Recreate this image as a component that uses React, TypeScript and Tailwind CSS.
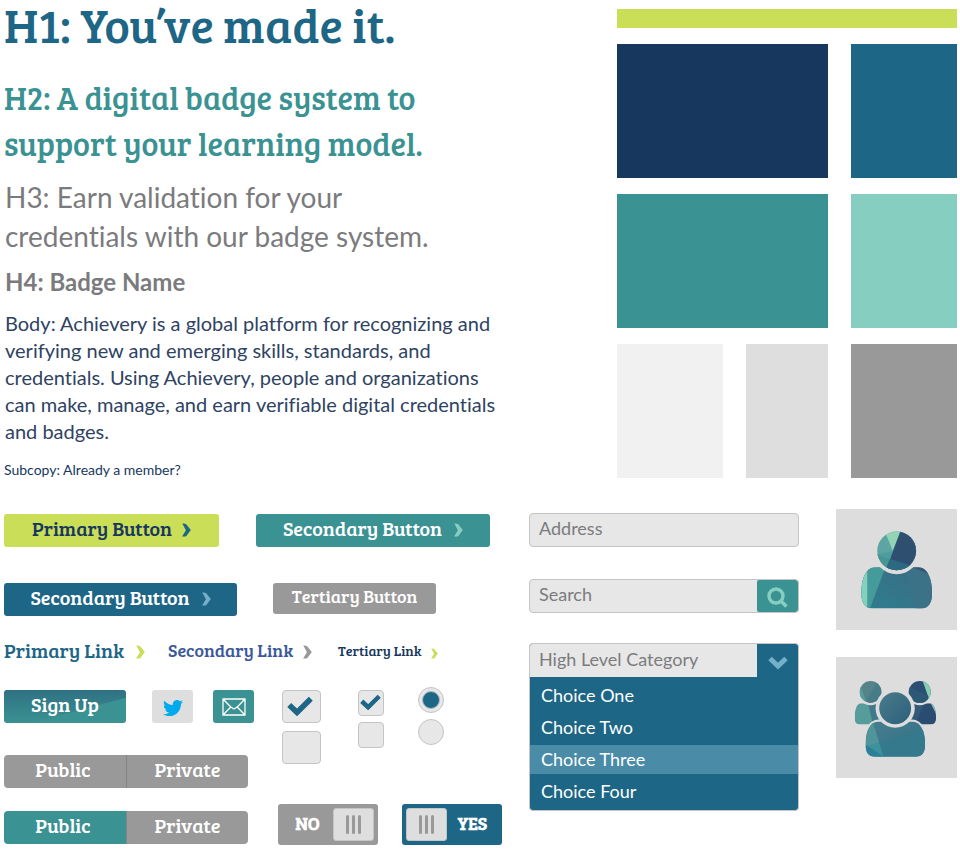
import { useState } from "react";
import type { ReactNode } from "react";
import { FaTwitter } from "react-icons/fa";

const slab = "font-['Bree_Serif','DejaVu_Serif_Condensed','DejaVu_Serif',serif]";

function Chevron({ className }: { className: string }) {
  return (
    <svg viewBox="0 0 9 14" aria-hidden="true" className={`mt-1 shrink-0 fill-current ${className}`}>
      <path d="M0.3 0.6 Q2.6 0.2 4.2 1.2 L8.8 7 L4.4 13 Q2.6 13.9 0.1 13.4 L3.9 7.2 Z" />
    </svg>
  );
}

function Check({ className }: { className: string }) {
  return (
    <svg
      viewBox="0 0 26 20"
      aria-hidden="true"
      className={`pointer-events-none absolute hidden fill-none stroke-[#1d6686] peer-checked:block ${className}`}
    >
      <path d="M2.2 9 L10 16.4 L23.8 2.8" strokeWidth="5.6" strokeLinejoin="miter" />
    </svg>
  );
}

function CheckBox({ label, small, defaultChecked }: { label: string; small?: boolean; defaultChecked?: boolean }) {
  return (
    <label className={`relative block ${small ? "h-[26px] w-[26px]" : "h-[33px] w-[39px]"}`}>
      <input
        type="checkbox"
        aria-label={label}
        defaultChecked={defaultChecked}
        className="peer block h-full w-full appearance-none rounded-[4px] border border-[#c4c4c4] bg-[#e7e7e7]"
      />
      <Check className={small ? "top-1 left-[2px] w-[21px]" : "top-[6px] left-[5px] w-[26px]"} />
    </label>
  );
}

function Radio({ label, defaultChecked }: { label: string; defaultChecked?: boolean }) {
  return (
    <label className="relative block h-[26px] w-[26px]">
      <input
        type="radio"
        name="option"
        aria-label={label}
        defaultChecked={defaultChecked}
        className="peer block h-full w-full appearance-none rounded-full border border-[#c4c4c4] bg-[#e7e7e7]"
      />
      <span className="pointer-events-none absolute inset-1 hidden rounded-full border border-[#a9bcc6] bg-[#1d6686] peer-checked:block" />
    </label>
  );
}

function Segmented({ label, initial }: { label: string; initial: string }) {
  const [active, setActive] = useState(initial);
  return (
    <div role="group" aria-label={label} className={`flex h-[33px] w-[244px] overflow-hidden rounded-[4px] text-xl text-white ${slab}`}>
      {["Public", "Private"].map((name) => (
        <button
          key={name}
          type="button"
          aria-pressed={active === name}
          onClick={() => setActive(name)}
          className={`w-1/2 border-l border-[#858585] pb-[5px] first:border-l-0 first:pr-1 ${active === name ? "bg-[#3a9292]" : "bg-[#999999]"}`}
        >
          {name}
        </button>
      ))}
    </div>
  );
}

function Toggle({ label, initial }: { label: string; initial: boolean }) {
  const [on, setOn] = useState(initial);
  return (
    <button
      type="button"
      role="switch"
      aria-label={label}
      aria-checked={on}
      onClick={() => setOn(!on)}
      className={`flex h-[41px] w-[100px] items-center justify-between rounded-[3px] px-1 text-lg font-bold text-white ${slab} ${on ? "flex-row-reverse bg-[#1d6686]" : "bg-[#999999]"}`}
    >
      <span className="flex-1 pb-1 text-center">{on ? "YES" : "NO"}</span>
      <span className="flex h-[33px] w-[41px] items-center justify-center gap-[3px] rounded-[3px] border border-[#c4c4c4] bg-[#dedede]">
        <span className="h-[19px] w-[3px] rounded-full bg-[#999999]" />
        <span className="h-[19px] w-[3px] rounded-full bg-[#999999]" />
        <span className="h-[19px] w-[3px] rounded-full bg-[#999999]" />
      </span>
    </button>
  );
}

function Button({ className, children }: { className: string; children: ReactNode }) {
  return (
    <button type="button" className={`flex items-center justify-center rounded-[3px] pb-[5px] ${slab} ${className}`}>
      {children}
    </button>
  );
}

function Palette() {
  return (
    <div aria-label="Colour palette" className="grid w-[340px] shrink-0 grid-cols-[106fr_82fr_106fr] gap-x-[23px] gap-y-4 self-start pt-[9px]">
      <div className="col-span-3 h-[19px] bg-[#cade58]" />
      <div className="col-span-2 h-[134px] bg-[#17375e]" />
      <div className="h-[134px] bg-[#1d6686]" />
      <div className="col-span-2 h-[134px] bg-[#3a9292]" />
      <div className="h-[134px] bg-[#86cfc0]" />
      <div className="h-[134px] bg-[#f1f1f1]" />
      <div className="h-[134px] bg-[#dedede]" />
      <div className="h-[134px] bg-[#999999]" />
    </div>
  );
}

function PersonCard() {
  return (
    <svg viewBox="32 28 364 363" role="img" aria-label="Member" className="block w-full bg-[#dddddd]">
      <defs>
        <clipPath id="person-head">
          <circle cx="214.500" cy="154" r="58.500" />
        </clipPath>
        <clipPath id="person-body">
          <path d="M150 203 C122 203 108 238 108 282 C108 310 120 327 142 327 H288 C310 327 321 310 321 282 C321 238 307 203 279 203 Z" />
        </clipPath>
        <linearGradient id="person-main" x1="0" y1="1" x2="1" y2="0">
          <stop offset="0" stopColor="#2e7f90" />
          <stop offset="1" stopColor="#3b6a82" />
        </linearGradient>
      </defs>
      <g clipPath="url(#person-body)">
        <rect x="100" y="195" width="230" height="140" fill="url(#person-main)" />
        <path d="M100 195 H184 L133 330 H100 Z" fill="#459b99" />
        <path d="M100 195 H126 V330 H100 Z" fill="#83d0bd" />
        <path d="M236 195 H330 V330 H272 Z" fill="#3c7287" />
        <path d="M262 203 H300 L314 225 Z" fill="#3b5777" />
      </g>
      <circle cx="214.500" cy="154" r="70" fill="#dddddd" />
      <g clipPath="url(#person-head)">
        <rect x="150" y="90" width="130" height="130" fill="#5da5a2" />
        <path d="M182 103 L190 90 H228 L203 154 Z" fill="#93d3b5" />
        <path d="M228 90 H280 V215 H180 Z" fill="#2f4f70" />
        <path d="M238 90 H280 V156 Z" fill="#335873" />
        <path d="M150 160 L194 180 L178 215 H150 Z" fill="#489694" />
        <path d="M194 178 L280 205 V220 H178 Z" fill="#2c6a82" />
        <path d="M203 154 L194 180 L158 164 Z" fill="#4e9d9d" />
      </g>
    </svg>
  );
}

function GroupCard() {
  return (
    <svg viewBox="34 23 364 364" role="img" aria-label="Group" className="block w-full bg-[#dddddd]">
      <defs>
        <clipPath id="group-left">
          <circle cx="138" cy="128" r="32.500" />
        </clipPath>
        <clipPath id="group-right">
          <circle cx="286" cy="128" r="33" />
        </clipPath>
        <clipPath id="group-left-body">
          <path d="M108 162 C96 163 90 184 90 206 C90 219 95 226 106 226 H190 V162 Z" />
        </clipPath>
        <clipPath id="group-right-body">
          <path d="M317 162 C329 163 335 184 335 206 C335 219 330 226 319 226 H235 V162 Z" />
        </clipPath>
        <clipPath id="group-body">
          <path d="M162 217 C137 217 123 246 123 286 C123 310 133 323 152 323 H273 C292 323 302 310 302 286 C302 246 288 217 263 217 Z" />
        </clipPath>
        <linearGradient id="group-face" x1="0" y1="0" x2="1" y2="1">
          <stop offset="0" stopColor="#4a7c8a" />
          <stop offset="1" stopColor="#2c5f7c" />
        </linearGradient>
        <linearGradient id="group-torso" x1="0" y1="0" x2="1" y2="1">
          <stop offset="0" stopColor="#4a7f8f" />
          <stop offset="1" stopColor="#2f6f86" />
        </linearGradient>
      </defs>
      <g clipPath="url(#group-left-body)">
        <rect x="90" y="160" width="100" height="70" fill="#559c9a" />
        <path d="M130 160 H190 V230 H146 Z" fill="#41788a" />
      </g>
      <g clipPath="url(#group-right-body)">
        <rect x="235" y="160" width="102" height="70" fill="#2a4c70" />
        <path d="M235 160 H300 L270 230 H235 Z" fill="#345877" />
        <path d="M317 158 L338 200 V158 Z" fill="#86cfb2" />
      </g>
      <circle cx="138" cy="128" r="40" fill="#dddddd" />
      <circle cx="286" cy="128" r="40" fill="#dddddd" />
      <g clipPath="url(#group-left)">
        <rect x="100" y="90" width="76" height="76" fill="#558389" />
        <path d="M100 105 L108 110 L126 162 H100 Z" fill="#559c9a" />
        <path d="M158 98 L124 154 L130 165 H176 V100 Z" fill="#467c88" />
      </g>
      <g clipPath="url(#group-right)">
        <rect x="250" y="90" width="76" height="76" fill="#2b4e72" />
        <path d="M293 90 L314 150 H325 V90 Z" fill="#86cfb2" />
        <path d="M250 110 L312 140 L300 165 H250 Z" fill="#2c5876" />
      </g>
      <path
        d="M162 217 C137 217 123 246 123 286 C123 310 133 323 152 323 H273 C292 323 302 310 302 286 C302 246 288 217 263 217 Z"
        fill="#dddddd"
        stroke="#dddddd"
        strokeWidth="12"
      />
      <g clipPath="url(#group-body)">
        <rect x="120" y="210" width="185" height="116" fill="url(#group-torso)" />
        <path d="M120 210 H142 L164 280 L120 294 Z" fill="#4f9599" />
        <path d="M120 294 L164 280 L178 326 H120 Z" fill="#3d939d" />
        <path d="M164 280 L305 238 V326 H178 Z" fill="#34798c" />
        <path d="M120 285 L178 323 H120 Z" fill="#2b7f98" />
      </g>
      <circle cx="212" cy="177" r="59" fill="#dddddd" />
      <circle cx="212" cy="177" r="48" fill="url(#group-face)" />
    </svg>
  );
}

const choices = ["Choice One", "Choice Two", "Choice Three", "Choice Four"];

function CategorySelect() {
  const [value, setValue] = useState("");
  const [hovered, setHovered] = useState("Choice Three");
  return (
    <div className="mt-[30px] overflow-hidden rounded-[4px] border border-[#c4c4c4] bg-[#1d6686]">
      <div className="relative">
        <select
          aria-label="High Level Category"
          value={value}
          onChange={(e) => setValue(e.target.value)}
          className="block h-[33px] w-full appearance-none bg-[#e7e7e7] pb-1 pl-[9px] text-lg text-[#7b7b7e]"
        >
          <option value="">High Level Category</option>
          {choices.map((c) => (
            <option key={c}>{c}</option>
          ))}
        </select>
        <span className="pointer-events-none absolute inset-y-0 right-0 flex w-[41px] items-center justify-center bg-[#1d6686]">
          <svg viewBox="0 0 20 14" aria-hidden="true" className="mt-1 w-5 fill-none stroke-[#74b1c9]">
            <path d="M2 2.500 L10 10 L18 2.500" strokeWidth="5" />
          </svg>
        </span>
      </div>
      <ul role="listbox" aria-label="Choices" className="flex flex-col gap-[3px] py-1 text-lg text-white">
        {choices.map((c) => (
          <li
            key={c}
            role="option"
            aria-selected={value === c}
            onMouseEnter={() => setHovered(c)}
            onClick={() => setValue(c)}
            className={`h-[29px] pl-[11px] leading-[28px] ${hovered === c ? "bg-[#4a8ca8]" : ""}`}
          >
            {c}
          </li>
        ))}
      </ul>
    </div>
  );
}

export default function App() {
  return (
    <main className="bg-white pr-[3px] pb-2 pl-1 font-[Lato,sans-serif] [font-variant-ligatures:none]">
      <section className="flex justify-between gap-8">
        <div className="w-[500px]">
          <h1 className={`text-5xl leading-[48px] text-[#1d6686] ${slab}`}>H1: You’ve made it.</h1>
          <h2 className={`mt-[27px] text-[32px] leading-[46px] text-[#3a9292] ${slab}`}>
            H2: A digital badge system to support your learning model.
          </h2>
          <div className="pl-px">
            <h3 className="mt-[11px] w-[460px] text-[28px] leading-[39px] text-[#7b7b7e]">
              H3: Earn validation for your
              <br />
              credentials with our badge system.
            </h3>
            <h4 className="mt-[10px] text-2xl leading-8 font-bold text-[#7b7b7e]">H4: Badge Name</h4>
            <p className="mt-3 text-xl leading-[27px] text-[#2f4363]">
              Body: Achievery is a global platform for recognizing and verifying new and emerging skills, standards, and
              credentials. Using Achievery, people and organizations can make, manage, and earn verifiable digital
              credentials and badges.
            </p>
          </div>
          <p className="mt-[15px] text-sm leading-5 text-[#17375e]">Subcopy: Already a member?</p>
        </div>
        <Palette />
      </section>

      <section className="mt-[29px] flex items-start">
        <div className="w-[498px] shrink-0 pt-[5px]">
          <div className="flex gap-[37px]">
            <Button className="h-[33px] w-[215px] gap-[10px] bg-[#cade58] text-xl text-[#17375e]">
              Primary Button <Chevron className="h-[14px] w-[9px] text-[#1d6686]" />
            </Button>
            <Button className="h-[33px] w-[234px] gap-3 bg-[#3a9292] text-xl text-white">
              Secondary Button <Chevron className="h-[14px] w-[9px] text-[#86cfc0]" />
            </Button>
          </div>
          <div className="mt-9 flex gap-9">
            <Button className="h-[33px] w-[233px] gap-3 bg-[#1d6686] text-xl text-white">
              Secondary Button <Chevron className="h-[14px] w-[9px] text-[#74b1c9]" />
            </Button>
            <Button className="h-[31px] w-[163px] bg-[#999999] text-lg text-white">Tertiary Button</Button>
          </div>
          <nav aria-label="Links" className={`mt-[18px] flex h-8 items-center ${slab}`}>
            <a href="#primary" className="flex w-[164px] items-center gap-3 text-xl text-[#1d6686]">
              Primary Link <Chevron className="h-[14px] w-[9px] text-[#cade58]" />
            </a>
            <a href="#secondary" className="flex w-[170px] items-center gap-[10px] text-lg text-[#3b5998]">
              Secondary Link <Chevron className="h-[14px] w-[9px] text-[#999999]" />
            </a>
            <a href="#tertiary" className="flex items-center gap-[10px] pt-[2px] text-sm text-[#17375e]">
              Tertiary Link <Chevron className="h-[11px] w-[7px] text-[#cade58]" />
            </a>
          </nav>
          <div className="mt-5 flex gap-6">
            <div className="pt-1">
              <div className="flex">
                <Button className="h-[33px] w-[122px] bg-[linear-gradient(165deg,transparent_61%,#3a9292_62%),linear-gradient(to_bottom,#2f7182,#3a9292)] text-xl text-white">
                  Sign Up
                </Button>
                <button type="button" aria-label="Twitter" className="ml-[26px] flex h-[33px] w-[41px] items-center justify-center rounded-[3px] bg-[#dedede]">
                  <FaTwitter className="mt-[2px] h-5 w-5 text-[#00aaed]" />
                </button>
                <button type="button" aria-label="Email" className="ml-5 flex h-[33px] w-[41px] items-center justify-center rounded-[3px] bg-[#3a9292]">
                  <svg viewBox="0 0 24 18" aria-hidden="true" className="w-6 fill-none stroke-white">
                    <path
                      d="M1 1 H23 V17 H1 Z M1 1 L8.800 9 L1 17 M23 1 L15.200 9 L23 17 M8.800 9 L12 11 L15.200 9"
                      strokeWidth="1.300"
                    />
                  </svg>
                </button>
              </div>
              <div className="mt-8 flex flex-col gap-[23px]">
                <Segmented label="Visibility, unset" initial="" />
                <Segmented label="Visibility" initial="Public" />
              </div>
            </div>
            <div>
              <div className="flex h-[118px]">
                <div className="flex flex-col gap-2 pt-1 pl-1">
                  <CheckBox label="Large option one" defaultChecked />
                  <CheckBox label="Large option two" />
                </div>
                <div className="ml-[37px] flex flex-col gap-[6px] pt-1">
                  <CheckBox small label="Small option one" defaultChecked />
                  <CheckBox small label="Small option two" />
                </div>
                <div className="ml-[34px] flex flex-col gap-[6px] pt-px">
                  <Radio label="Radio option one" defaultChecked />
                  <Radio label="Radio option two" />
                </div>
              </div>
              <div className="flex gap-6">
                <Toggle label="Notifications" initial={false} />
                <Toggle label="Sharing" initial />
              </div>
            </div>
          </div>
        </div>

        <div className="ml-[27px] flex min-w-0 flex-1 flex-col pt-1">
          <input
            type="text"
            aria-label="Address"
            placeholder="Address"
            className="block h-[34px] w-full rounded-[4px] border border-[#c4c4c4] bg-[#e7e7e7] pb-1 pl-[9px] text-lg placeholder:text-[#7b7b7e]"
          />
          <div className="mt-8 flex overflow-hidden rounded-[4px] border border-[#c4c4c4] bg-[#e7e7e7]">
            <input
              type="search"
              aria-label="Search"
              placeholder="Search"
              className="block h-8 min-w-0 flex-1 pb-1 pl-[9px] text-lg placeholder:text-[#7b7b7e]"
            />
            <button type="button" aria-label="Run search" className="flex w-[41px] items-center justify-center rounded-[2px] bg-[#3a9292]">
              <svg viewBox="0 0 21 21" aria-hidden="true" className="mt-[2px] w-[21px] fill-none stroke-[#86cfc0]">
                <circle cx="9" cy="9" r="7" strokeWidth="3.400" />
                <path d="M13.500 13.500 L19.400 19.400" strokeWidth="3.600" />
              </svg>
            </button>
          </div>
          <CategorySelect />
        </div>

        <div className="ml-[37px] flex w-[121px] shrink-0 flex-col gap-[27px]">
          <PersonCard />
          <GroupCard />
        </div>
      </section>
    </main>
  );
}
